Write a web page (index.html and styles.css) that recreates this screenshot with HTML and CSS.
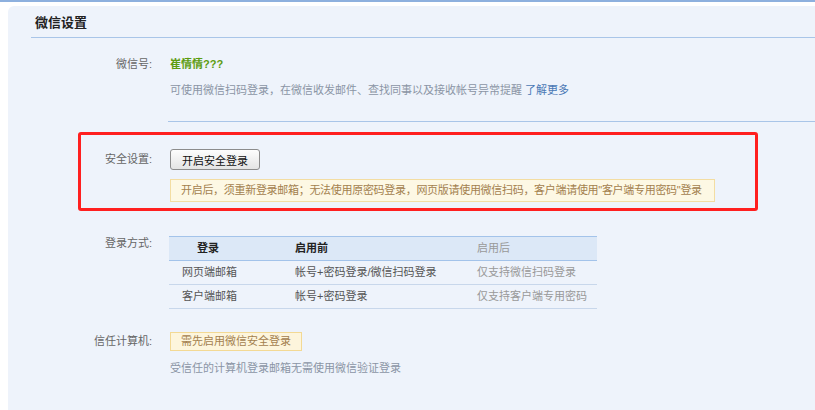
FILE: index.html
```html
<!DOCTYPE html>
<html lang="zh-CN">
<head>
  <meta charset="UTF-8" />
  <title>微信设置</title>
  <link rel="stylesheet" href="styles.css">
</head>
<body>
  <div class="panel">
    <h1 class="title">微信设置</h1>

    <!-- 微信号 -->
    <div class="row row-wx">
      <div class="label">微信号:</div>
      <div class="content sep">
        <div class="nick">崔情情???</div>
        <p class="desc">可使用微信扫码登录，在微信收发邮件、查找同事以及接收帐号异常提醒 <a href="#" class="more">了解更多</a></p>
      </div>
    </div>

    <!-- 安全设置 -->
    <div class="mark">
      <div class="row row-safe">
        <div class="label">安全设置:</div>
        <div class="content">
          <button class="btn">开启安全登录</button>
          <div class="warn">开启后，须重新登录邮箱；无法使用原密码登录，网页版请使用微信扫码，客户端请使用"客户端专用密码"登录</div>
        </div>
      </div>
    </div>

    <!-- 登录方式 -->
    <div class="row row-login">
      <div class="label">登录方式:</div>
      <div class="content">
        <table class="ways">
          <thead>
            <tr>
              <th class="c1">登录</th>
              <th class="c2">启用前</th>
              <th class="c3">启用后</th>
            </tr>
          </thead>
          <tbody>
            <tr>
              <td>网页端邮箱</td>
              <td>帐号+密码登录/微信扫码登录</td>
              <td class="after">仅支持微信扫码登录</td>
            </tr>
            <tr>
              <td>客户端邮箱</td>
              <td>帐号+密码登录</td>
              <td class="after">仅支持客户端专用密码</td>
            </tr>
          </tbody>
        </table>
      </div>
    </div>

    <!-- 信任计算机 -->
    <div class="row row-trust">
      <div class="label">信任计算机:</div>
      <div class="content">
        <span class="tip">需先启用微信安全登录</span>
        <p class="desc">受信任的计算机登录邮箱无需使用微信验证登录</p>
      </div>
    </div>
  </div>
</body>
</html>
```

FILE: styles.css
```css
html, body {
  height: 100%;
}

body {
  margin: 0;
  background: #fff;
  border-top: 2px solid #8db0de;
  box-sizing: border-box;
  font-family: "Liberation Sans", "Noto Sans CJK SC", sans-serif;
  font-size: 11px;
  color: #555;
  overflow: hidden;
}

.panel {
  margin: 4px 0 0 8px;
  height: 100%;
  background: #eef3fb;
  border-top-left-radius: 6px;
}

.title {
  margin: 0 0 0 23px;
  padding: 0 0 0 4px;
  height: 31px;
  line-height: 33px;
  font-size: 13px;
  font-weight: bold;
  color: #222;
  border-bottom: 1px solid #a9c5e8;
}

.row {
  display: grid;
  grid-template-columns: 144px 1fr;
  column-gap: 18px;
  line-height: 18px;
}

.label {
  text-align: right;
  color: #666;
}

.desc {
  margin: 8px 0 0;
  color: #8b95a5;
}

a.more {
  color: #4a78b5;
  text-decoration: none;
}

/* 微信号 */
.row-wx {
  margin-top: 17px;
}

.nick {
  color: #5c9c10;
  font-weight: bold;
}

.sep {
  margin-left: -2px;
  padding: 0 0 22px 2px;
  border-bottom: 1px solid #a9c5e8;
}

/* 安全设置 */
.mark {
  margin: 10px 57px 0 70px;
  border: 3px solid #ff1f1f;
  border-radius: 3px;
  padding: 14px 0 6px;
}

.row-safe {
  grid-template-columns: 71px 1fr;
}

.row-safe .label {
  line-height: 21px;
}

.btn {
  display: block;
  height: 21px;
  padding: 0 11px;
  font-family: inherit;
  font-size: 11px;
  color: #111;
  background: linear-gradient(#fdfdfd, #e4e4e4);
  border: 1px solid #8c8c8c;
  border-radius: 3px;
}

.warn {
  margin-top: 9px;
  width: 523px;
  height: 21px;
  line-height: 21px;
  padding: 0 10px;
  white-space: nowrap;
  letter-spacing: -0.3px;
  background: #fdf8e4;
  border: 1px solid #f3dda2;
  color: #a3814e;
}

/* 登录方式 */
.row-login {
  margin-top: 25px;
}

.row-login .label {
  margin-top: -2px;
}

.ways {
  width: 428px;
  margin-left: -1px;
  border-collapse: collapse;
  table-layout: fixed;
  line-height: 23px;
}

.ways th,
.ways td {
  padding: 0 0 0 13px;
  text-align: left;
  white-space: nowrap;
  border-bottom: 1px solid #c8d7eb;
}

.ways thead tr {
  background: #dce8f7;
  border-top: 1px solid #a3c3ea;
}

.ways th {
  color: #222;
  border-bottom-color: #a3c3ea;
}

.ways th.c1 {
  width: 85px;
  padding-left: 28px;
}

.ways .c2 {
  width: 169px;
}

.ways th.c3 {
  font-weight: normal;
  color: #999;
}

.ways td.after {
  color: #999;
}

/* 信任计算机 */
.row-trust {
  margin-top: 23px;
}

.row-trust .label {
  line-height: 19px;
}

.tip {
  display: inline-block;
  height: 17px;
  line-height: 17px;
  padding: 0 10px;
  background: #fdf5dc;
  border: 1px solid #f3d994;
  color: #a3804e;
}
```
